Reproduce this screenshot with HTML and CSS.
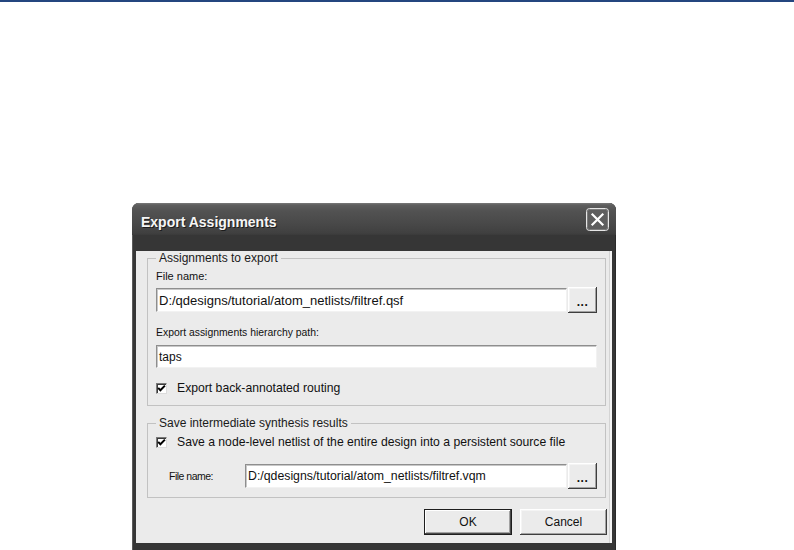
FILE: index.html
```html
<!DOCTYPE html>
<html>
<head>
<meta charset="utf-8">
<link rel="stylesheet" href="styles.css">
</head>
<body>
<div class="topline"></div>
<div class="stage">
  <div class="dialog">
    <div class="titlebar">
      <span class="title">Export Assignments</span>
      <span class="close">
        <svg width="23" height="23" viewBox="0 0 23 23">
          <rect x="0.5" y="0.5" width="22" height="22" rx="3" ry="3" fill="#5e5e5e" stroke="#e6e6e6" stroke-width="1"/>
          <rect x="1.5" y="1.5" width="20" height="20" rx="2" ry="2" fill="none" stroke="#7c7c7c" stroke-width="1"/>
          <path d="M6.5 6.5 L16.5 16.5 M16.5 6.5 L6.5 16.5" stroke="#ffffff" stroke-width="2.2" stroke-linecap="square"/>
        </svg>
      </span>
    </div>
    <div class="client">
      <fieldset class="group g1">
        <legend>Assignments to export</legend>
        <div class="label">File name:</div>
        <div class="row">
          <div class="input file1">D:/qdesigns/tutorial/atom_netlists/filtref.qsf</div>
          <div class="btn browse">...</div>
        </div>
        <div class="label label2">Export assignments hierarchy path:</div>
        <div class="input path">taps</div>
        <div class="check check1">
          <span class="box"><svg width="9" height="9" viewBox="0 0 9 9"><path d="M1.2 3.8 L3.4 6.3 L7.9 1.6" fill="none" stroke="#000" stroke-width="2"/></svg></span>
          <span>Export back-annotated routing</span>
        </div>
      </fieldset>
      <fieldset class="group g2">
        <legend>Save intermediate synthesis results</legend>
        <div class="check check2">
          <span class="box"><svg width="9" height="9" viewBox="0 0 9 9"><path d="M1.2 3.8 L3.4 6.3 L7.9 1.6" fill="none" stroke="#000" stroke-width="2"/></svg></span>
          <span>Save a node-level netlist of the entire design into a persistent source file</span>
        </div>
        <div class="row row2">
          <div class="label small">File name:</div>
          <div class="input file2">D:/qdesigns/tutorial/atom_netlists/filtref.vqm</div>
          <div class="btn browse">...</div>
        </div>
      </fieldset>
      <div class="actions">
        <div class="btn push default">OK</div>
        <div class="btn push cancel">Cancel</div>
      </div>
    </div>
  </div>
</div>
</body>
</html>
```
FILE: styles.css
```css
html, body {
  margin: 0;
  padding: 0;
  background: #ffffff;
  overflow: hidden;
}
body {
  width: 794px;
  height: 550px;
  font-family: "Liberation Sans", Arial, sans-serif;
  color: #111111;
}
.topline {
  height: 2px;
  background: #24467f;
}
.stage {
  padding: 201px 0 0 132px;
}
.dialog {
  width: 484px;
  background: #363636;
  border-radius: 7px 7px 0 0;
  padding-bottom: 7px;
  box-shadow: inset 1px 0 #5a5a5a, inset -1px 0 #2a2a2a;
}
.titlebar {
  height: 32px;
  display: flex;
  align-items: flex-start;
  justify-content: space-between;
  padding: 0 7px 0 9px;
  box-sizing: border-box;
  border-radius: 7px 7px 0 0;
  background: linear-gradient(#7a7a7a 0px, #5e5e5e 2px, #525252 8px, #494949 20px, #404040 30px, #3a3a3a 32px);
}
.title {
  margin-top: 11px;
  font-weight: bold;
  font-size: 14px;
  line-height: 16px;
  color: #f6f6f6;
  text-shadow: 1px 1px 0 #1c1c1c;
}
.close {
  margin-top: 5px;
  width: 23px;
  height: 23px;
  display: block;
}
.close svg {
  display: block;
}
.client {
  margin: 0 4px;
  background: #ebebeb;
  padding-bottom: 8px;
  box-shadow: inset -2px 0 #f4f4f4, inset -3px 0 #d4d4d4;
}
.group {
  margin: 0 6px 0 11px;
  padding: 0 8px 10px 8px;
  border: 1px solid #c2c2c2;
  min-width: 0;
}
.g1 {
  margin-top: 16px;
}
.g2 {
  margin-top: 10px;
  padding-bottom: 8px;
}
.group legend {
  font-size: 12px;
  line-height: 14px;
  padding: 0 3px 0 3px;
  color: #1a1a1a;
}
.label {
  font-size: 11px;
  line-height: 14px;
  margin-top: 4px;
}
.label2 {
  margin-top: 13px;
  font-size: 10.4px;
}
.row {
  display: flex;
  align-items: center;
  margin-top: 4px;
}
.input {
  background: #ffffff;
  box-sizing: border-box;
  height: 24px;
  border-top: 1px solid #8e8e8e;
  border-left: 1px solid #8e8e8e;
  border-right: 1px solid #f2f2f2;
  border-bottom: 1px solid #f2f2f2;
  box-shadow: inset 1px 1px 0 #c8c8c8;
  padding: 0 0 0 2px;
  display: flex;
  align-items: center;
  white-space: nowrap;
  overflow: hidden;
  color: #111;
}
.file1 {
  width: 411px;
  font-size: 13px;
}
.path {
  width: 441px;
  height: 23px;
  margin-top: 5px;
  font-size: 12px;
}
.file2 {
  width: 322px;
  font-size: 12.3px;
}
.btn {
  background: #ebebeb;
  box-sizing: border-box;
  box-shadow: inset -1px -1px 0 #3e3e3e, inset 1px 1px 0 #ffffff, inset -2px -2px 0 #a2a2a2, inset 2px 2px 0 #f4f4f4;
  display: flex;
  align-items: center;
  justify-content: center;
  color: #111;
}
.browse {
  width: 29px;
  height: 26px;
  margin-left: 1px;
  font-size: 12px;
  font-weight: bold;
  letter-spacing: 0.5px;
  padding-top: 4px;
}
.check {
  display: flex;
  align-items: center;
  font-size: 12.2px;
  line-height: 14px;
}
.check1 {
  margin-top: 13px;
}
.check2 {
  margin-top: 5px;
}
.box {
  width: 11px;
  height: 11px;
  box-sizing: border-box;
  background: #ffffff;
  border-top: 1px solid #7a7a7a;
  border-left: 1px solid #7a7a7a;
  border-right: 1px solid #dcdcdc;
  border-bottom: 1px solid #dcdcdc;
  box-shadow: inset 1px 1px 0 #3c3c3c;
  margin-right: 10px;
  display: flex;
  align-items: center;
  justify-content: center;
}
.box svg {
  display: block;
}
.row2 {
  margin-top: 14px;
}
.small {
  flex: 1;
  margin: 0 0 0 13px;
  font-size: 10.5px;
  letter-spacing: -0.5px;
}
.actions {
  display: flex;
  justify-content: flex-end;
  gap: 8px;
  margin: 11px 5px 0 0;
}
.push {
  height: 26px;
  font-size: 12px;
}
.default {
  width: 88px;
  box-shadow: inset 0 0 0 1px #1e1e1e, inset -2px -2px 0 #4a4a4a, inset 2px 2px 0 #ffffff, inset -3px -3px 0 #a2a2a2;
}
.cancel {
  width: 87px;
}
```
